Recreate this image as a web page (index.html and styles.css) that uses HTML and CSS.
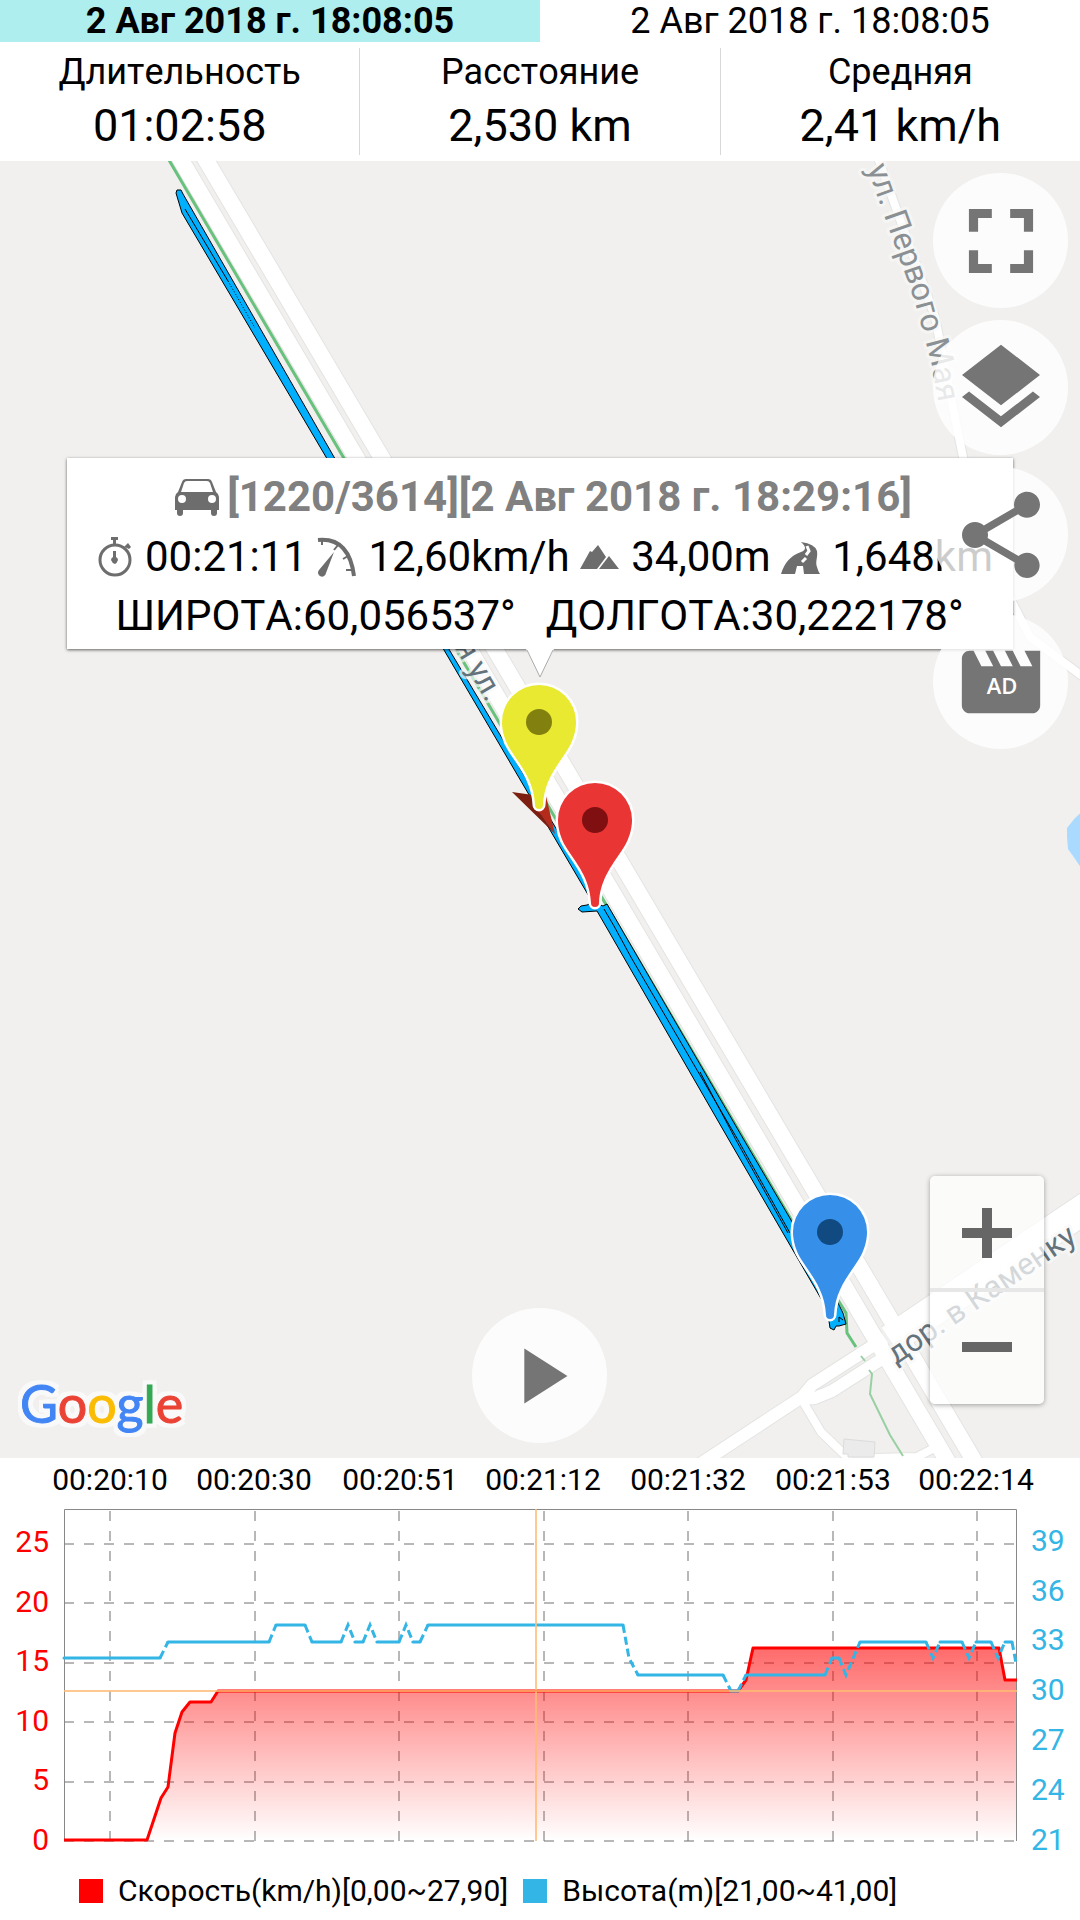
FILE: index.html
```html
<!DOCTYPE html>
<html lang="ru">
<head>
<meta charset="utf-8">
<meta name="viewport" content="width=device-width, initial-scale=1">
<title>Трек</title>
<link rel="stylesheet" href="styles.css">
</head>
<body>
<div class="app">
  <nav class="tabs">
    <button class="tab tab-active" type="button">2 Авг 2018 г. 18:08:05</button>
    <button class="tab" type="button">2 Авг 2018 г. 18:08:05</button>
  </nav>
  <dl class="stats">
    <div class="stat"><dt>Длительность</dt><dd>01:02:58</dd></div>
    <div class="stat"><dt>Расстояние</dt><dd>2,530 km</dd></div>
    <div class="stat"><dt>Средняя</dt><dd>2,41 km/h</dd></div>
  </dl>

  <main class="map">
    <svg class="map-canvas" viewBox="0 161 1080 1297" preserveAspectRatio="xMidYMid slice">
      <defs>
        <path id="pin" d="M-37 0A37 37 0 0 1 37 0C37 9 34 19 29 27C19 43 5 58 4 83A4 4 0 0 1 -4 83C-5 58 -19 43 -29 27C-34 19 -37 9 -37 0Z"/>
        <path id="street-may" d="M867 168L885 218L915 302L930 358L945 435"/>
        <path id="street-kamenka" d="M896 1365L1094 1230"/>
        <path id="street-ul" d="M425 597L487 703"/>
      </defs>

      <path class="lake" d="M1084 810L1075 818L1067 828L1067 837L1068 849L1073 856L1084 872Z"/>
      <g class="road-case">
        <path class="w8" d="M877 155L935 317L952 403L963 457L985 545L1012 602L1030 637L1090 682"/>
        <path class="w12" d="M700 1464L802 1397L812 1385L885 1338M802 1399L815 1398L832 1391L885 1357"/>
        <path class="w8" d="M802 1400L821 1432L850 1460M873 1458L917 1457L940 1445"/>
        <path class="w34" d="M890 1340L1090 1205"/>
        <path class="w16" d="M178 155L945 1457L949 1464M203 155L976 1464"/>
      </g>
      <g class="road">
        <path class="w8" d="M877 155L935 317L952 403L963 457L985 545L1012 602L1030 637L1090 682"/>
        <path class="w12" d="M700 1464L802 1397L812 1385L885 1338M802 1399L815 1398L832 1391L885 1357"/>
        <path class="w8" d="M802 1400L821 1432L850 1460M873 1458L917 1457L940 1445"/>
        <path class="w34" d="M890 1340L1090 1205"/>
        <path class="w16" d="M178 155L945 1457L949 1464M203 155L976 1464"/>
      </g>
      <path class="building" d="M844 1439L875 1442L874 1457L848 1457L848 1454L843 1454Z"/>
      <path class="trail" d="M166 155L460 656L795 1226L838 1300L846 1313L847 1333L856 1347"/>
      <path class="trail trail-thin" d="M861 1356L865 1361M869 1370L872 1374L870 1394L890 1435L903 1456"/>

      <g class="track">
        <path d="M176 193L177 190L181 190L183 194L334 457L453 656L533 790L557 830L592 880L598 904L603 906L607 904L622 930L744 1140L791 1220L838 1303L843 1313L846 1324L839 1326L836 1326L834 1330L830 1328L829 1321L832 1312L823 1302L729 1140L608 930L597 911L582 912L578 909L581 906L587 905L592 903L590 898L550 830L528 793L444 650L326 457L182 213Z"/>
        <path class="track-inner" d="M185 209L228 281M604 909L614 926L632 959L690 1058M690 1058L738 1140L790 1233M700 1072L736 1140L788 1233M839 1322L839 1317L843 1320"/>
        <path class="track-dots" d="M228 281L255 328"/>
      </g>

      <g class="street">
        <text class="street-soft"><textPath href="#street-may">ул. Первого Мая</textPath></text>
        <text text-anchor="end"><textPath href="#street-ul" startOffset="100%">я ул.</textPath></text>
        <text><textPath href="#street-kamenka">дор. в Каменку</textPath></text>
      </g>

      <path d="M512 792L555 834L538 810L540 796Z" fill="#7c1e10"/>
      <path d="M555 834L536 808L546 796Z" fill="#b42b1c"/>
      <g class="pin" transform="translate(595 820)"><use href="#pin" fill="#ea3535"/><circle r="13" fill="#7f0f10"/></g>
      <g class="pin" transform="translate(539 722)"><use href="#pin" fill="#e9e932"/><circle r="13" fill="#82800f"/></g>
      <g class="pin" transform="translate(830 1232)"><use href="#pin" fill="#3690ea"/><circle r="13" fill="#114a80"/></g>
    </svg>

    <section class="popup">
      <h2 class="popup-title">
        <svg class="ic-car" viewBox="0 0 44 38"><path fill-rule="evenodd" d="M11 1H33Q36 1 37 4L41 14Q44 16 44 19V32H42V35Q42 38 39 38Q36 38 36 35V32H8V35Q8 38 5 38Q2 38 2 35V32H0V19Q0 16 3 14L7 4Q8 1 11 1ZM12 3Q10 3 9 5L6 14H38L35 5Q34 3 32 3ZM7 17A4 4 0 1 0 7 25A4 4 0 1 0 7 17ZM37 17A4 4 0 1 0 37 25A4 4 0 1 0 37 17Z"/></svg>
        <span>[1220/3614][2 Авг 2018 г. 18:29:16]</span>
      </h2>
      <div class="popup-row popup-metrics">
        <span class="metric"><svg class="ic-watch" viewBox="0 0 36 40"><circle cx="17" cy="23" r="15" fill="none" stroke="#6d6d6d" stroke-width="3"/><path d="M13 0H20V3H18V8H15V3H13ZM26 10L28 8L30 6L33 10L31 12L29 11ZM15 14H18V20Q20 21 20 23Q19 26 17 27Q14 26 13 23Q13 21 15 20Z"/></svg>00:21:11</span>
        <span class="metric"><svg class="ic-gauge" viewBox="0 0 40 40"><path d="M1 3Q32 0 37 39" fill="none" stroke="#6d6d6d" stroke-width="4"/><path d="M5 4V8M21 8L17 13M31 19L26 22M36 33H29" fill="none" stroke="#6d6d6d" stroke-width="2"/><path d="M17 15L9 36A4 4 0 1 1 2 33Z"/></svg>12,60km/h</span>
        <span class="metric"><svg class="ic-peak" viewBox="0 0 40 24"><path d="M0 24L10 6L12 7L18 0L26 12L17 24ZM19 24L29 11L39 24Z"/></svg>34,00m</span>
        <span class="metric"><svg class="ic-road" viewBox="0 0 40 33"><path d="M0 33Q5 16 20 11Q28 8 20 1Q34 3 36 10C37 17 34 20 36 26Q37 30 39 33H23L22 25H16L14 33Z"/><path d="M26 5L28 10L25 14M25 17L21 21" stroke="#fff" stroke-width="3" fill="none"/></svg>1,648km</span>
      </div>
      <div class="popup-row popup-coords"><span>ШИРОТА:60,056537°</span><span>ДОЛГОТА:30,222178°</span></div>
      <svg class="popup-tail" viewBox="0 0 28 28"><path d="M0 0H28L14 28Z" fill="#fff"/><path d="M1 1L14 28L27 1" fill="none" stroke="#aaa" stroke-width="1"/></svg>
    </section>

    <div class="tools">
      <button class="round" type="button" aria-label="Полный экран"><svg class="ic-full" viewBox="0 0 24 24"><path d="M7 14H5v5h5v-2H7v-3zm-2-4h2V7h3V5H5v5zm12 7h-3v2h5v-5h-2v3zM14 5v2h3v3h2V5h-5z"/></svg></button>
      <button class="round" type="button" aria-label="Слои"><svg class="ic-tool" viewBox="0 0 24 24"><path d="M11.99 18.54l-7.37-5.73L3 14.07l9 7 9-7-1.63-1.27-7.38 5.74zM12 16l7.36-5.73L21 9l-9-7-9 7 1.63 1.27L12 16z"/></svg></button>
      <button class="round" type="button" aria-label="Поделиться"><svg class="ic-tool" viewBox="0 0 24 24"><path d="M18 16.08c-.76 0-1.44.3-1.96.77L8.91 12.7c.05-.23.09-.46.09-.7s-.04-.47-.09-.7l7.05-4.11c.54.5 1.25.81 2.04.81 1.66 0 3-1.34 3-3s-1.34-3-3-3-3 1.34-3 3c0 .24.04.47.09.7L8.04 9.81C7.5 9.31 6.79 9 6 9c-1.66 0-3 1.34-3 3s1.34 3 3 3c.79 0 1.5-.31 2.04-.81l7.12 4.16c-.05.21-.08.43-.08.65 0 1.61 1.31 2.92 2.92 2.92s2.92-1.31 2.92-2.92-1.31-2.92-2.92-2.92z"/></svg></button>
      <button class="round" type="button"><svg class="ic-small" viewBox="0 0 94 94"><path transform="scale(3.917)" d="M18 4l2 4h-3l-2-4h-2l2 4h-3l-2-4H8l2 4H7L5 4H4c-1.1 0-1.99.9-1.99 2L2 18c0 1.1.9 2 2 2h16c1.1 0 2-.9 2-2V4h-4z"/><text class="ad" x="48" y="59" text-anchor="middle">AD</text></svg></button>
    </div>

    <div class="zoom">
      <button type="button" aria-label="Увеличить"><svg viewBox="0 0 50 50"><path d="M20 0H30V20H50V30H30V50H20V30H0V20H20Z"/></svg></button>
      <button type="button" aria-label="Уменьшить"><svg viewBox="0 0 50 50"><path d="M0 20H50V30H0Z"/></svg></button>
    </div>

    <button class="round play" type="button" aria-label="Воспроизвести"><svg class="ic-small" viewBox="0 0 24 24"><path d="M8 5v14l11-7z"/></svg></button>

    <a class="logo" href="#"><span class="g-blue">G</span><span class="g-red">o</span><span class="g-yellow">o</span><span class="g-blue">g</span><span class="g-green">l</span><span class="g-red">e</span></a>
  </main>

  <section class="chart">
    <svg class="plot" viewBox="0 1458 1080 402">
      <defs>
        <linearGradient id="speed-fill" gradientUnits="userSpaceOnUse" x1="0" y1="1509" x2="0" y2="1841">
          <stop offset="0" stop-color="#f00"/><stop offset="1" stop-color="#f00" stop-opacity="0"/>
        </linearGradient>
      </defs>
      <g class="grid">
        <path d="M110 1841V1509M255 1841V1509M399 1841V1509M544 1841V1509M688 1841V1509M833 1841V1509M977 1841V1509"/>
        <path d="M64 1544H1017M64 1603H1017M64 1663H1017M64 1722H1017M64 1782H1017M64 1841H1017"/>
      </g>
      <path class="frame" d="M64.5 1841V1509.5H1016.5V1841"/>
      <path fill="url(#speed-fill)" d="M147 1841L161 1798L168 1787L175 1733L182 1712L190 1702H211L218 1691H738L746 1680L753 1648H999L1005 1680H1016V1841Z"/>
      <path class="speed" d="M64 1840H147L161 1798L168 1787L175 1733L182 1712L190 1702H211L218 1691H738L746 1680L753 1648H999L1005 1680H1017"/>
      <g class="alt">
        <path d="M64 1658H160M168 1642H269M276 1625H305M312 1642H341M355 1642H363M377 1642H399M413 1642H420M428 1625H623M638 1675H723M731 1691H738M746 1675H825M832 1658H839M860 1642H926M940 1642H962M976 1642H991M1005 1642H1012"/>
        <path class="alt-dash" d="M160 1658L168 1642M269 1642L276 1625M305 1625L312 1642M341 1642L348 1625L355 1642M363 1642L370 1625L377 1642M399 1642L406 1625L413 1642M420 1642L428 1625M623 1625L629 1658L638 1675M723 1675L731 1691M738 1691L746 1675M825 1675L832 1658M839 1658L846 1675L860 1642M926 1642L933 1658L940 1642M962 1642L969 1658L976 1642M991 1642L998 1658L1005 1642M1012 1642L1016 1663"/>
      </g>
      <path class="cursor" d="M64 1691H1017M536 1509V1841"/>
      <g class="x-labels">
        <text x="110" y="1490">00:20:10</text><text x="254" y="1490">00:20:30</text><text x="400" y="1490">00:20:51</text><text x="543" y="1490">00:21:12</text><text x="688" y="1490">00:21:32</text><text x="833" y="1490">00:21:53</text><text x="976" y="1490">00:22:14</text>
      </g>
      <g class="y-left">
        <text x="49" y="1552">25</text><text x="49" y="1612">20</text><text x="49" y="1671">15</text><text x="49" y="1731">10</text><text x="49" y="1790">5</text><text x="49" y="1850">0</text>
      </g>
      <g class="y-right">
        <text x="1031" y="1551">39</text><text x="1031" y="1601">36</text><text x="1031" y="1650">33</text><text x="1031" y="1700">30</text><text x="1031" y="1750">27</text><text x="1031" y="1800">24</text><text x="1031" y="1850">21</text>
      </g>
    </svg>
    <ul class="legend">
      <li><span class="swatch swatch-speed"></span>Скорость(km/h)[0,00~27,90]</li>
      <li><span class="swatch swatch-alt"></span>Высота(m)[21,00~41,00]</li>
    </ul>
  </section>
</div>
</body>
</html>
```
FILE: styles.css
```css
* { box-sizing: border-box; }

body {
  margin: 0;
  background: #fff;
  color: #000;
  font-family: Roboto, "Noto Sans", sans-serif;
}

button {
  margin: 0;
  padding: 0;
  border: 0;
  background: none;
  color: inherit;
  font: inherit;
}

svg { display: block; flex: none; }

.app {
  display: flex;
  flex-direction: column;
  min-height: 100vh;
}

/* Header */
.tabs { display: flex; }
.tab {
  flex: 1;
  font-size: 36px;
  line-height: 42px;
  text-align: center;
}
.tab-active {
  background: #afeeee;
  font-weight: 700;
}

.stats {
  display: flex;
  margin: 6px 0;
  text-align: center;
}
.stat { flex: 1; }
.stat + .stat { border-left: 1px solid #d8d8d8; }
.stat dt { font-size: 36px; line-height: 48px; font-kerning: none; }
.stat dd { margin: 0; font-size: 45px; line-height: 59px; }

/* Map */
.map {
  position: relative;
  flex: 1;
  min-height: 1000px;
  overflow: hidden;
  background: #f1f0ee;
}
.map-canvas {
  position: absolute;
  width: 100%;
  height: 100%;
}
.lake { fill: #aadaff; }
.road, .road-case { fill: none; stroke-linejoin: round; }
.road { stroke: #fff; }
.road .w8 { stroke-width: 8; }
.road .w12 { stroke-width: 12; }
.road .w16 { stroke-width: 16; }
.road .w34 { stroke-width: 30; }
.road-case { stroke: #e4e4e3; }
.road-case .w8 { stroke-width: 10; }
.road-case .w12 { stroke-width: 14; }
.road-case .w16 { stroke-width: 18; }
.road-case .w34 { stroke-width: 32; }
.building { fill: #ebebeb; stroke: #dcdcdc; }
.trail { fill: none; stroke: #68c17c; stroke-width: 3; }
.trail-thin { stroke: #99d0a3; stroke-width: 2; }
.track { fill: #00b0ff; stroke: #000; stroke-width: 1; }
.track-inner { fill: none; }
.track-dots { fill: none; stroke-dasharray: 1 2; }
.street {
  fill: #64737b;
  stroke: #f8f8f8;
  stroke-width: 6;
  stroke-opacity: .7;
  paint-order: stroke;
  stroke-linejoin: round;
  font-size: 31px;
}
.street-soft { fill: #8a9093; font-size: 32px; }
.pin use { stroke: #fff; stroke-width: 5; paint-order: stroke; }

.popup {
  position: absolute;
  top: 297px;
  left: 67px;
  right: 67px;
  padding: 9px 20px 4px 31px;
  background: #fff;
  box-shadow: 0 1px 3px rgba(0, 0, 0, .6);
  font-size: 42px;
  line-height: 60px;
  font-kerning: none;
  white-space: nowrap;
}
.popup svg { fill: #6d6d6d; }
.popup-title {
  display: flex;
  align-items: center;
  justify-content: center;
  gap: 8px;
  margin: 0 4px 0 0;
  color: #808080;
  font-size: 42px;
  line-height: 60px;
}
.popup-row { display: flex; }
.popup-metrics { justify-content: space-between; }
.metric { display: flex; align-items: center; gap: 11px; }
.popup-coords {
  justify-content: center;
  gap: 30px;
  padding-right: 12px;
  line-height: 58px;
}
.popup-tail {
  position: absolute;
  top: 100%;
  left: 50%;
  width: 28px;
  margin-left: -14px;
}
.ic-car { width: 44px; }
.ic-watch { width: 36px; }
.ic-gauge, .ic-peak, .ic-road { width: 40px; }

.tools {
  position: absolute;
  top: 12px;
  right: 12px;
  display: flex;
  flex-direction: column;
  gap: 12px;
}
.round {
  display: flex;
  align-items: center;
  justify-content: center;
  width: 135px;
  height: 135px;
  border-radius: 50%;
  background: rgba(255, 255, 255, .8);
}
.round svg { fill: #757575; }
.ic-full { width: 110px; }
.ic-tool { width: 104px; }
.ic-small { width: 94px; }
.round .ad {
  fill: #fff;
  font-family: "Open Sans", sans-serif;
  font-size: 22px;
  font-weight: 600;
}
.play {
  position: absolute;
  bottom: 15px;
  left: 50%;
  margin-left: -68px;
}

.zoom {
  position: absolute;
  right: 36px;
  bottom: 54px;
  width: 114px;
  border-radius: 5px;
  background: rgba(255, 255, 255, .72);
  box-shadow: 0 1px 5px rgba(0, 0, 0, .35);
}
.zoom button {
  display: flex;
  align-items: center;
  justify-content: center;
  width: 100%;
  height: 114px;
}
.zoom button + button { box-shadow: 0 -2px #e7e7e7, inset 0 2px #e7e7e7; }
.zoom svg { width: 50px; fill: #666; }

.logo {
  position: absolute;
  left: 20px;
  bottom: 22px;
  font-family: Lato, sans-serif;
  font-size: 52px;
  line-height: 66px;
  text-decoration: none;
  -webkit-text-stroke: 1px currentColor;
  filter: drop-shadow(4px 0 #f9f9f9) drop-shadow(-4px 0 #f9f9f9) drop-shadow(0 4px #f9f9f9) drop-shadow(0 -4px #f9f9f9);
}
.g-blue { color: #4285f4; }
.g-red { color: #ea4335; }
.g-yellow { color: #fbbc05; }
.g-green { color: #34a853; }

/* Chart */
.plot { width: 100%; font-size: 30px; }
.grid { fill: none; stroke: #707070; stroke-width: 1; stroke-dasharray: 10 10; }
.frame { fill: none; stroke: #888; stroke-width: 1; }
.speed { fill: none; stroke: #f00; stroke-width: 3; stroke-linejoin: round; }
.alt { fill: none; stroke: #33b5e5; stroke-width: 3; stroke-linecap: round; }
.alt-dash { stroke-linecap: butt; stroke-dasharray: 8 4; }
.cursor { fill: none; stroke: #ffbb73; stroke-opacity: .8; stroke-width: 2; }
.x-labels { text-anchor: middle; }
.y-left { fill: #f00; text-anchor: end; }
.y-right { fill: #33b5e5; }

.legend {
  display: flex;
  align-items: center;
  gap: 15px;
  min-height: 60px;
  margin: 0;
  padding: 2px 79px 0;
  list-style: none;
  font-size: 30px;
  line-height: 36px;
  white-space: nowrap;
}
.legend li { display: flex; align-items: center; gap: 15px; }
.swatch { width: 24px; height: 24px; }
.swatch-speed { background: #f00; }
.swatch-alt { background: #33b5e5; }
```
